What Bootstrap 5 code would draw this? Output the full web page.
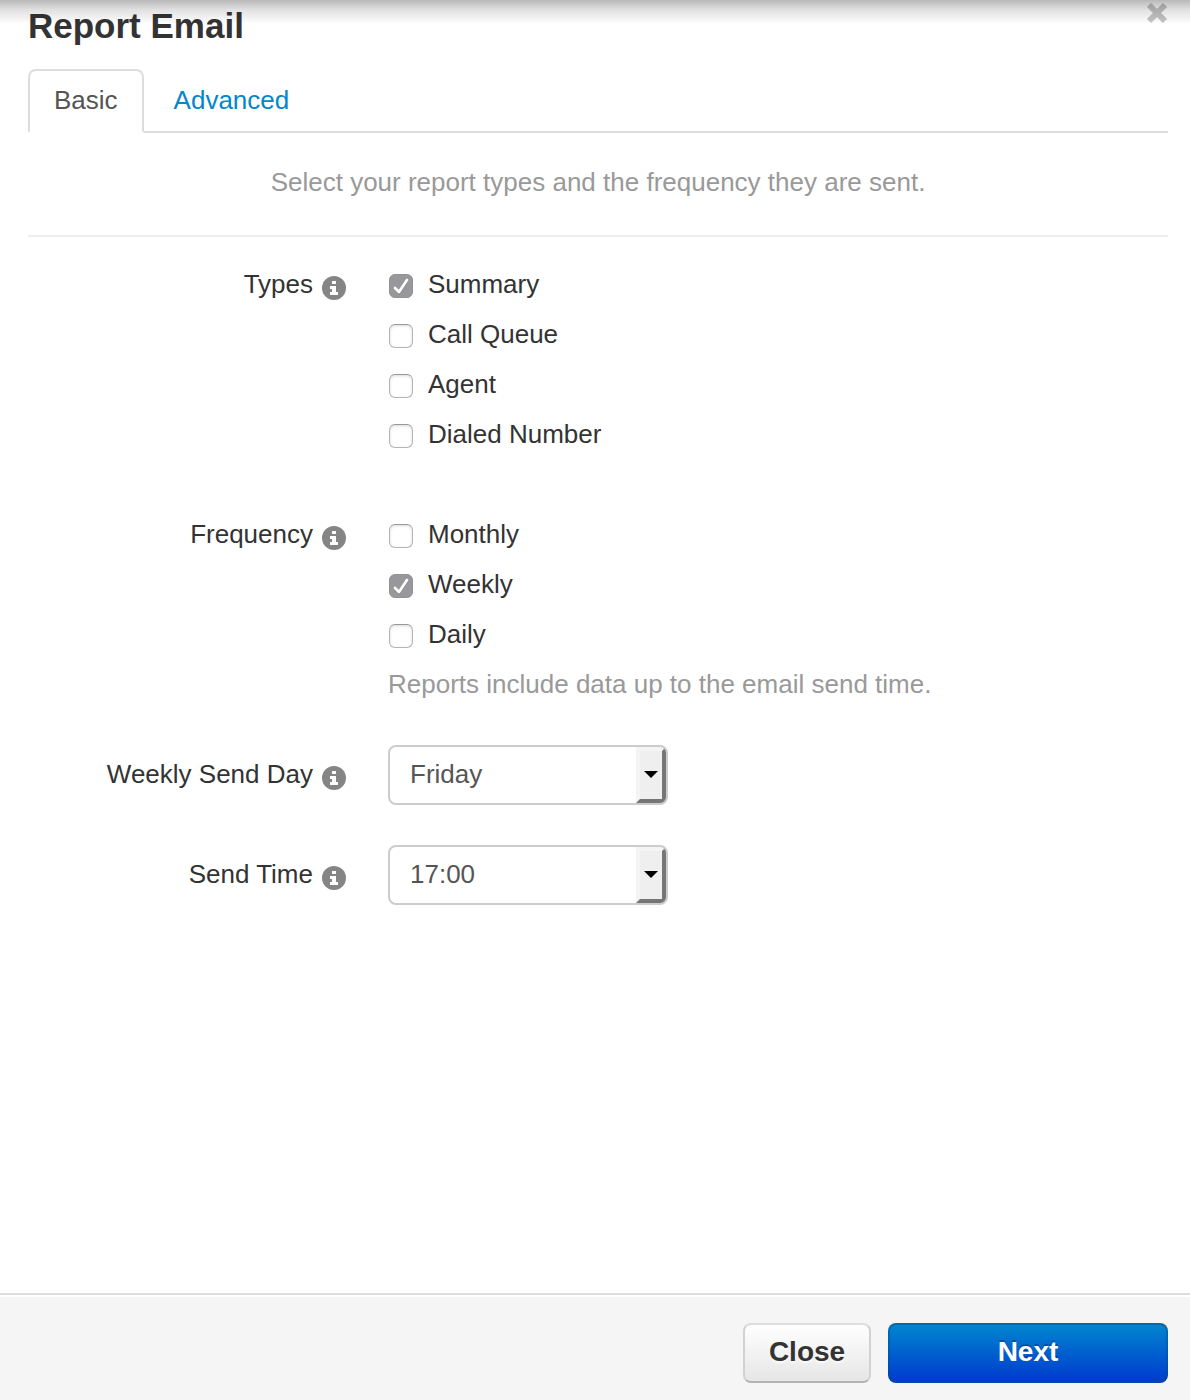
<!DOCTYPE html>
<html lang="en">
<head>
<meta charset="utf-8">
<meta name="viewport" content="width=device-width, initial-scale=1">
<title>Report Email</title>
<link href="https://cdn.jsdelivr.net/npm/bootstrap@5.3.0/dist/css/bootstrap.min.css" rel="stylesheet">
<style>
  body { font-family: "Liberation Sans", Arial, sans-serif; font-size: 26px; line-height: 38px; color: #333; background: #fff; }
  .dialog-main { padding: 6px 22px 0 28px; }
  /* shadow cast by the page header above the dialog */
  .top-shade { top: 0; height: 24px; pointer-events: none; background: linear-gradient(rgba(0,0,0,.28), rgba(0,0,0,.12) 40%, rgba(0,0,0,0)); }
  .dialog-title { font-size: 35px; line-height: 40px; font-weight: 700; }
  .dismiss { width: 22px; height: 22px; margin-top: -4px; color: #c4c4c4; }
  .dismiss svg { display: block; }
  .nav-tabs { --bs-nav-tabs-border-width: 2px; --bs-nav-tabs-border-color: #ddd; --bs-nav-tabs-border-radius: 8px; margin-top: 23px; gap: 4px; }
  .nav-tabs .nav-link { padding: 10px 24px 12px; line-height: 38px; color: #08c; margin-bottom: -2px; border-width: 2px; }
  .nav-tabs .nav-link.active { color: #555; border-color: #ddd #ddd #fff; }
  .hint { color: #999; }
  .intro { padding: 30px 0 34px; border-bottom: 2px solid #eee; margin-bottom: 28px; }
  .field-row { gap: 40px; }
  .field-name { flex: 0 0 320px; display: flex; justify-content: flex-end; gap: 8px; padding-right: 1px; }
  .info-btn { width: 26px; height: 26px; margin-top: 10px; }
  .info-btn svg { display: block; }
  .choices { gap: 12px; }
  .choice { gap: 15px; padding-left: 1px; }
  .choice .form-check-input { width: 24px; height: 24px; margin: 4px 0 0; border: 1px solid #b4b4b4; border-top-color: #999; border-radius: 6px; box-shadow: inset 0 1px 3px rgba(0,0,0,.15); flex: none; }
  .choice .form-check-input:checked { background-color: #98979c; border-color: #929196; box-shadow: none; background-size: 22px 22px;
    background-image: url("data:image/svg+xml,%3Csvg xmlns='http://www.w3.org/2000/svg' viewBox='0 0 22 22'%3E%3Cpath d='M5 14l4 4 8-12' fill='none' stroke='%23777' stroke-opacity='.4' stroke-width='3'/%3E%3Cpath d='M5 13l4 4 8-12' fill='none' stroke='%23fff' stroke-width='2.700' stroke-linecap='round' stroke-linejoin='round'/%3E%3C/svg%3E"); }
  .types-row { margin-bottom: 62px; }
  .freq-row { margin-bottom: 42px; }
  .day-row { margin-bottom: 40px; }
  .pick-row .field-name { margin-top: 10px; }
  .pick { width: 280px; height: 60px; padding: 0 40px 2px 20px; font-size: 26px; line-height: 38px; color: #555; border: 2px solid #ccc; border-radius: 8px;
    background-position: right 0 center; background-size: 30px 56px;
    background-image: url("data:image/svg+xml,%3Csvg xmlns='http://www.w3.org/2000/svg' viewBox='0 0 30 56'%3E%3Cpath fill='%23f4f4f4' d='M0 0h30v56H0z'/%3E%3Cpath fill='%23efefef' d='M4 4h22v48H4z'/%3E%3Cpath fill='%23767676' d='M30 0v56H0l4-4h22V4z'/%3E%3Cpath d='M8 24h14l-7 7z'/%3E%3C/svg%3E"); }
  .dialog-foot { padding: 28px 22px 17px; gap: 17px; background: #f5f5f5; border-top: 2px solid #ddd; box-shadow: inset 0 2px 0 #fff; }
  .foot-btn { height: 60px; padding: 0 23px; font-size: 28px; line-height: 54px; font-weight: 700; border-width: 2px; border-radius: 8px; display: flex; justify-content: center; align-items: flex-start; }
  .btn-plain { width: 128px; color: #333; border-color: #ddd #d2d2d2 #b3b3b3; background: linear-gradient(#fff, #e6e6e6) padding-box; text-shadow: 0 2px 2px rgba(255,255,255,.75); }
  .btn-next { width: 280px; color: #fff; border-color: #0069b0 transparent #0048a8; background: linear-gradient(#0085cf, #003bcf) padding-box, linear-gradient(#0070b4, #0040b0) border-box; text-shadow: 0 -2px 0 rgba(0,0,0,.25); }
  .btn-next:hover { color: #fff; }
</style>
</head>
<body>
<svg class="d-none" xmlns="http://www.w3.org/2000/svg">
  <symbol id="info" viewBox="0 0 26 26">
    <circle cx="13" cy="13" r="12" fill="#858585"/>
    <path fill="#fff" d="M11 6h4v3h-4zM9 11h6v6h2v3H9v-3h2v-3H9z"/>
  </symbol>
</svg>
<div class="position-relative d-flex flex-column min-vh-100">
  <div class="top-shade position-absolute start-0 end-0"></div>
  <main class="dialog-main flex-grow-1">
    <header class="d-flex justify-content-between align-items-start">
      <h1 class="dialog-title mb-0">Report Email</h1>
      <button type="button" class="dismiss border-0 bg-transparent p-0" aria-label="Dismiss">
        <svg width="22" height="22" viewBox="0 0 22 22"><path d="M3 3l16 16M19 3L3 19" stroke="currentColor" stroke-width="6"/></svg>
      </button>
    </header>
    <ul class="nav nav-tabs">
      <li class="nav-item"><a class="nav-link active" aria-current="page" href="#basic">Basic</a></li>
      <li class="nav-item"><a class="nav-link" href="#advanced">Advanced</a></li>
    </ul>
    <p class="intro hint text-center">Select your report types and the frequency they are sent.</p>
    <form id="report">
      <div class="field-row types-row d-flex" role="group" aria-labelledby="types-name">
        <div class="field-name"><span id="types-name">Types</span><button type="button" class="info-btn border-0 bg-transparent p-0" aria-label="About types"><svg width="26" height="26"><use href="#info"/></svg></button></div>
        <div class="choices d-flex flex-column">
          <div class="choice d-flex align-items-center"><input class="form-check-input" type="checkbox" id="t1" checked><label for="t1">Summary</label></div>
          <div class="choice d-flex align-items-center"><input class="form-check-input" type="checkbox" id="t2"><label for="t2">Call Queue</label></div>
          <div class="choice d-flex align-items-center"><input class="form-check-input" type="checkbox" id="t3"><label for="t3">Agent</label></div>
          <div class="choice d-flex align-items-center"><input class="form-check-input" type="checkbox" id="t4"><label for="t4">Dialed Number</label></div>
        </div>
      </div>
      <div class="field-row freq-row d-flex" role="group" aria-labelledby="freq-name">
        <div class="field-name"><span id="freq-name">Frequency</span><button type="button" class="info-btn border-0 bg-transparent p-0" aria-label="About frequency"><svg width="26" height="26"><use href="#info"/></svg></button></div>
        <div class="choices d-flex flex-column">
          <div class="choice d-flex align-items-center"><input class="form-check-input" type="checkbox" id="f1"><label for="f1">Monthly</label></div>
          <div class="choice d-flex align-items-center"><input class="form-check-input" type="checkbox" id="f2" checked><label for="f2">Weekly</label></div>
          <div class="choice d-flex align-items-center"><input class="form-check-input" type="checkbox" id="f3"><label for="f3">Daily</label></div>
          <div class="hint">Reports include data up to the email send time.</div>
        </div>
      </div>
      <div class="field-row pick-row day-row d-flex">
        <div class="field-name"><label for="day">Weekly Send Day</label><button type="button" class="info-btn border-0 bg-transparent p-0" aria-label="About weekly send day"><svg width="26" height="26"><use href="#info"/></svg></button></div>
        <select class="form-select pick" id="day"><option>Friday</option></select>
      </div>
      <div class="field-row pick-row d-flex">
        <div class="field-name"><label for="time">Send Time</label><button type="button" class="info-btn border-0 bg-transparent p-0" aria-label="About send time"><svg width="26" height="26"><use href="#info"/></svg></button></div>
        <select class="form-select pick" id="time"><option>17:00</option></select>
      </div>
    </form>
  </main>
  <footer class="dialog-foot d-flex justify-content-end">
    <button type="button" class="btn foot-btn btn-plain">Close</button>
    <button type="submit" form="report" class="btn foot-btn btn-next">Next</button>
  </footer>
</div>
<script src="https://cdn.jsdelivr.net/npm/bootstrap@5.3.0/dist/js/bootstrap.bundle.min.js"></script>
</body>
</html>
